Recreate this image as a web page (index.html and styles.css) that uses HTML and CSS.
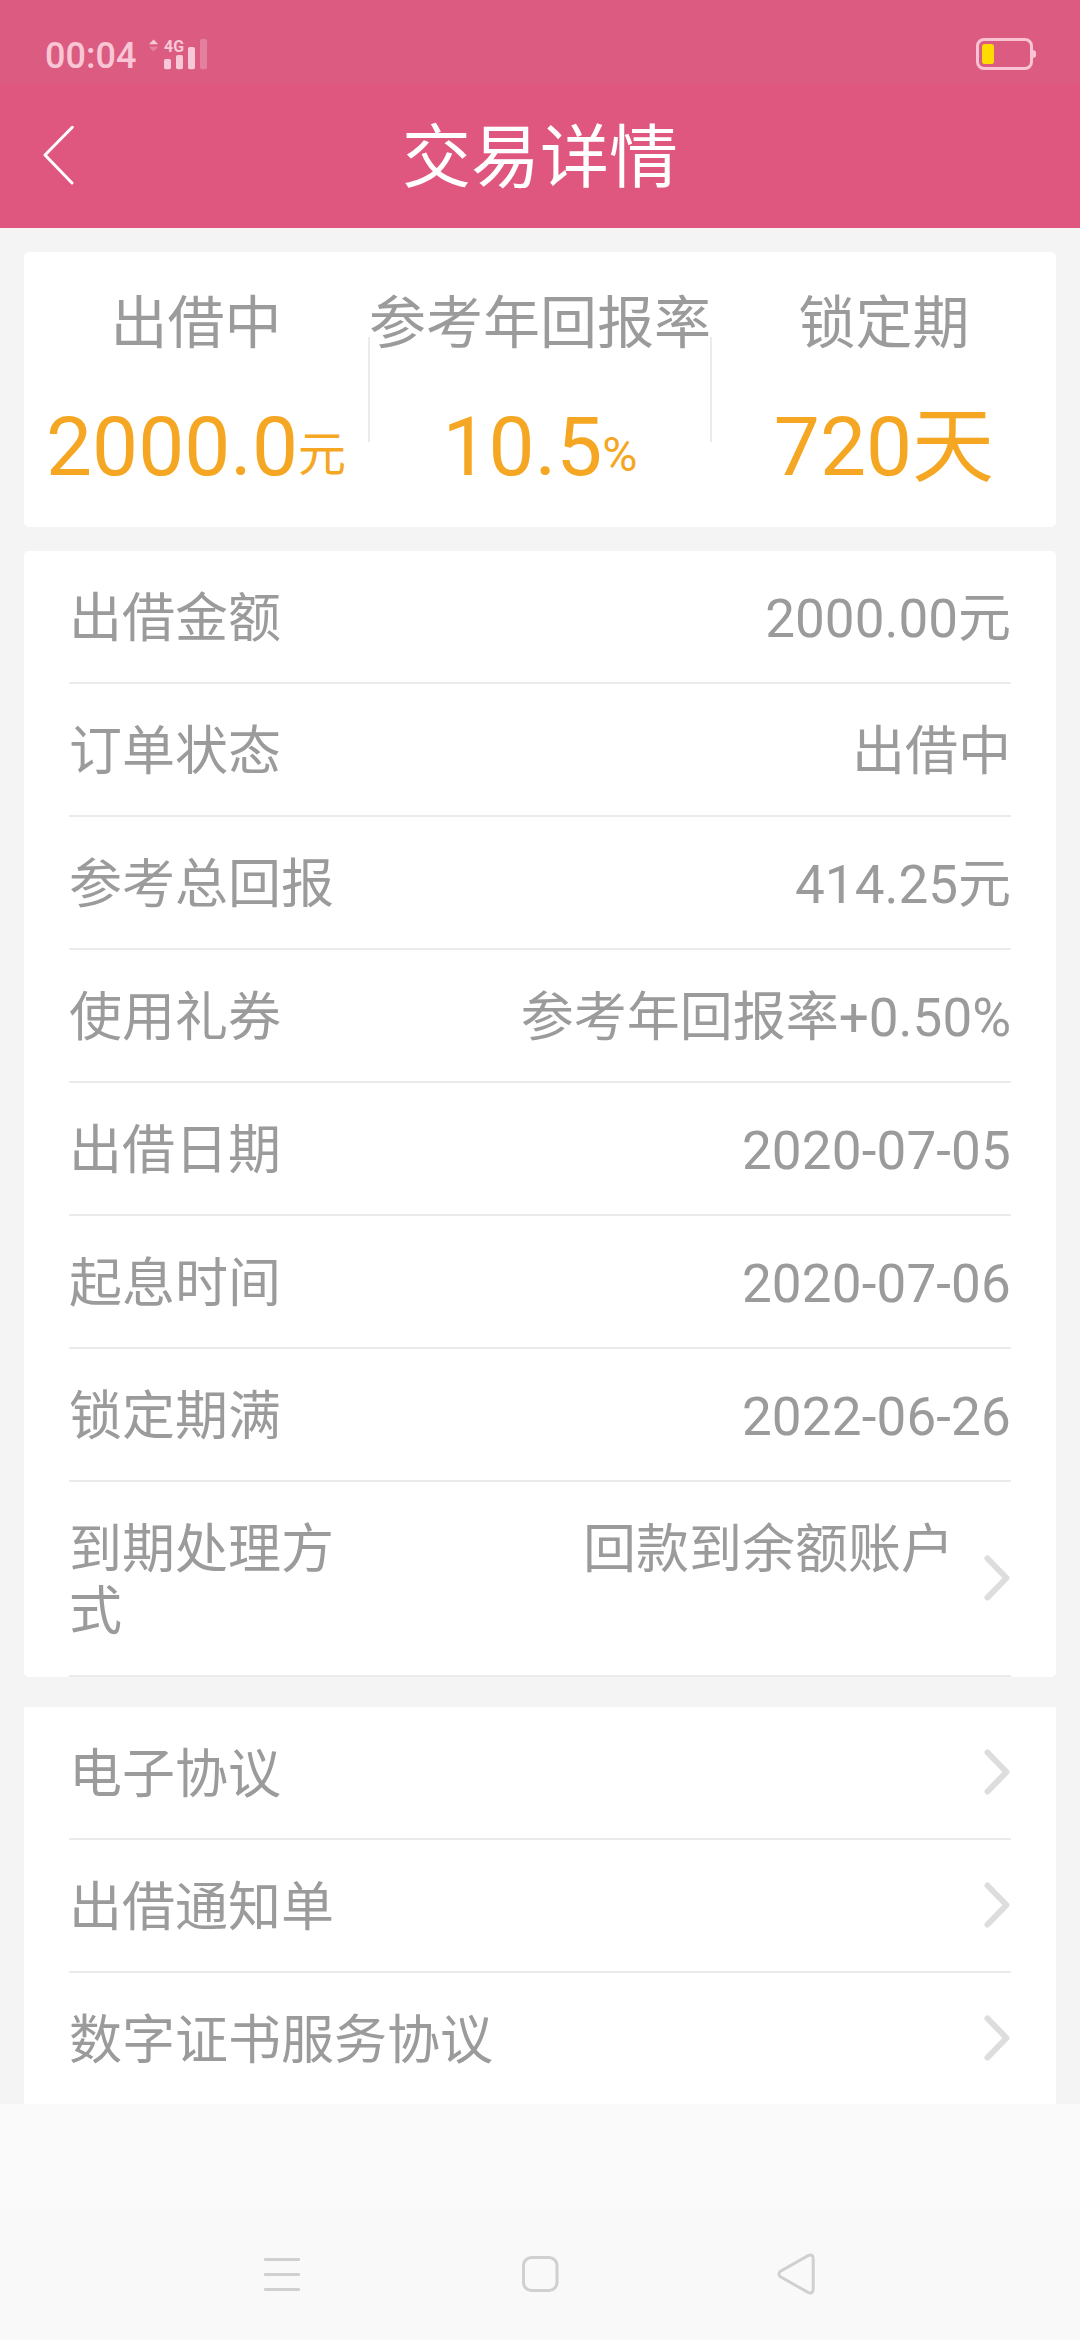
FILE: index.html
```html
<!DOCTYPE html>
<html lang="zh-CN">
<head>
<meta charset="utf-8">
<title>交易详情</title>
<link rel="stylesheet" href="styles.css">
</head>
<body>
<div class="statusbar">
  <span class="clock">00:04</span>
  <svg class="signal" width="60" height="36" viewBox="0 -4 60 36">
    <path d="M0 5.3L4.6.5L9.2 5.3Z" fill="#f7c9d8"/>
    <path d="M0 7.7L4.6 12.5L9.2 7.7Z" fill="#e5839f"/>
    <text class="network" x="15" y="12.5" textLength="20" lengthAdjust="spacingAndGlyphs">4G</text>
    <g fill="#f7c9d8">
      <rect x="15" y="20" width="7" height="10.3" rx="1.8"/>
      <rect x="27" y="16" width="7" height="14.3" rx="1.8"/>
      <rect x="39" y="8" width="7" height="22.3" rx="1.8"/>
    </g>
    <rect x="51" y="0" width="7" height="30.3" rx="1.8" fill="#e4809f"/>
  </svg>
  <svg class="battery" width="60" height="32" viewBox="0 0 60 32">
    <rect x="1.5" y="1.5" width="54" height="29" rx="6.5" fill="none" stroke="#fac3d4" stroke-width="3"/>
    <path d="M57 12.5a3 3.5 0 0 1 0 7Z" fill="#fac3d4" stroke="#fac3d4"/>
    <rect x="6" y="6" width="12" height="20" rx="2.8" fill="#fedc00"/>
  </svg>
</div>
<header class="header">
  <svg class="back" width="32" height="62" viewBox="0 0 32 62">
    <path d="M29.3 3.3L2 31L29 59" fill="none" stroke="#fff" stroke-width="3" stroke-linecap="round" stroke-linejoin="round"/>
  </svg>
  <h1 class="title">交易详情</h1>
</header>
<main class="content">
  <section class="summary">
    <div class="stat"><div class="stat-label">出借中</div><div class="stat-value">2000.0<span class="unit">元</span></div></div>
    <div class="stat divided"><div class="stat-label">参考年回报率</div><div class="stat-value">10.5<span class="unit">%</span></div></div>
    <div class="stat"><div class="stat-label">锁定期</div><div class="stat-value">720天</div></div>
  </section>
  <section class="card">
    <div class="row"><span class="label">出借金额</span><span class="value">2000.00元</span></div>
    <div class="row"><span class="label">订单状态</span><span class="value">出借中</span></div>
    <div class="row"><span class="label">参考总回报</span><span class="value">414.25元</span></div>
    <div class="row"><span class="label">使用礼券</span><span class="value">参考年回报率+0.50%</span></div>
    <div class="row"><span class="label">出借日期</span><span class="value date">2020-07-05</span></div>
    <div class="row"><span class="label">起息时间</span><span class="value date">2020-07-06</span></div>
    <div class="row"><span class="label">锁定期满</span><span class="value date">2022-06-26</span></div>
    <div class="row"><span class="label">到期处理方式</span><span class="value">回款到余额账户</span><svg class="chevron" viewBox="0 0 27 46"><path d="M3.5 3.5L22.5 23L3.5 42.5"/></svg></div>
  </section>
  <section class="card links">
    <div class="row"><span class="link">电子协议</span><svg class="chevron" viewBox="0 0 27 46"><path d="M3.5 3.5L22.5 23L3.5 42.5"/></svg></div>
    <div class="row"><span class="link">出借通知单</span><svg class="chevron" viewBox="0 0 27 46"><path d="M3.5 3.5L22.5 23L3.5 42.5"/></svg></div>
    <div class="row"><span class="link">数字证书服务协议</span><svg class="chevron" viewBox="0 0 27 46"><path d="M3.5 3.5L22.5 23L3.5 42.5"/></svg></div>
  </section>
</main>
<div class="spacer"></div>
<nav class="navbar">
  <svg width="40" height="42" viewBox="0 0 40 42"><g fill="#d0d0d0"><rect x="2" y="5" width="36" height="3" rx="1"/><rect x="2" y="20" width="36" height="3" rx="1"/><rect x="2" y="35" width="36" height="3" rx="1"/></g></svg>
  <svg width="40" height="42" viewBox="0 0 40 42"><rect x="4.500" y="4.500" width="33.500" height="33" rx="8" fill="none" stroke="#d0d0d0" stroke-width="3"/></svg>
  <svg width="40" height="42" viewBox="0 0 40 42"><path d="M32 2.600Q37.200.4 37.200 6V36Q37.200 41.600 32 39.400L4.500 23.800Q1.200 21 4.500 18.200Z" fill="none" stroke="#d0d0d0" stroke-width="3"/></svg>
</nav>
</body>
</html>
```
FILE: styles.css
```css
* {
  box-sizing: border-box;
}

body {
  margin: 0;
  width: 1080px;
  height: 2340px;
  overflow: hidden;
  display: flex;
  flex-direction: column;
  background: #fafafa;
  color: #9b9b9b;
  font-family: Roboto, "Noto Sans CJK SC", sans-serif;
}

svg {
  display: block;
  flex: none;
}

.statusbar {
  height: 84px;
  flex: none;
  display: flex;
  align-items: flex-start;
  padding: 35px 44px 0 45px;
  background: #db5c80;
}

.clock {
  width: 104px;
  margin-top: 3px;
  font-size: 36px;
  font-weight: 500;
  line-height: 36px;
  color: #f9c6d6;
}

.signal {
  overflow: visible;
}

.network {
  font: bold 17px Roboto, sans-serif;
  fill: #f7c9d8;
}

.battery {
  margin: 3px 0 0 auto;
}

.header {
  height: 144px;
  flex: none;
  display: grid;
  grid-template-columns: 75px 1fr 75px;
  background: #df577f;
}

.back {
  margin: 40px 0 0 43px;
}

.title {
  margin: 0;
  text-align: center;
  font-size: 69px;
  font-weight: 400;
  line-height: 150px;
  color: #fff;
}

.content {
  height: 1876px;
  flex: none;
  overflow: hidden;
  padding: 24px 24px 0;
  background: #f4f4f4;
}

.summary {
  height: 275px;
  display: grid;
  grid-template-columns: repeat(3, 344px);
  border-radius: 5px;
  background: #fff;
}

.stat {
  padding-top: 34px;
  text-align: center;
  white-space: nowrap;
}

.divided {
  background:
    linear-gradient(#ebebeb, #ebebeb) left 85px / 2px 105px no-repeat,
    linear-gradient(#ebebeb, #ebebeb) right 85px / 2px 105px no-repeat;
}

.stat-label {
  font-size: 57px;
  line-height: 76px;
}

.stat-value {
  margin-top: 35px;
  font-size: 82px;
  line-height: 100px;
  color: #f5a623;
}

.unit {
  font-size: 48px;
  line-height: 1;
  vertical-align: 4px;
}

.card {
  margin-top: 24px;
  padding: 0 45px;
  border-radius: 5px;
  background: #fff;
}

.links {
  margin-top: 30px;
  border-radius: 0;
}

.row {
  display: flex;
  justify-content: space-between;
  padding: 37px 0 32px;
  border-bottom: 2px solid #ebebeb;
  font-size: 53px;
  line-height: 62px;
}

.label {
  width: 283px;
}

.value {
  flex: 1;
  text-align: right;
}

.date {
  letter-spacing: 0.15px;
}

.chevron {
  width: 27px;
  height: 46px;
  margin-left: 30px;
  align-self: center;
  position: relative;
  top: -3px;
  fill: none;
  stroke: #ddd;
  stroke-width: 6px;
  stroke-linecap: round;
  stroke-linejoin: round;
}

.spacer {
  height: 104px;
  flex: none;
}

.navbar {
  height: 132px;
  flex: none;
  display: flex;
  justify-content: space-between;
  padding: 45px 264px 0 262px;
  background: #f9f9f9;
}
```
